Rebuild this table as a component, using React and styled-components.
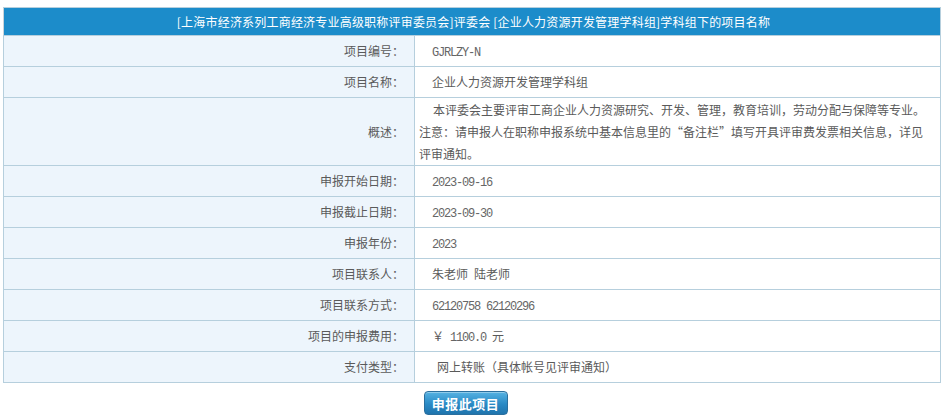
import styled, {createGlobalStyle} from 'styled-components';

const Global = createGlobalStyle`
  body{margin:0;background:#fff;font-family:"Noto Sans CJK SC","Liberation Sans",sans-serif;}
`;

/* ---------- styled ---------- */
const Page  = styled.div`padding:7px 6px 0 3px;`;
const Table = styled.table`
  width:938px;border-collapse:collapse;table-layout:fixed;
  border:1px solid #b6cfdd;border-left-color:#c9d3da;font-size:12px;color:#5a5a5a;
`;
const Head = styled.th`
  height:27px;padding:0 0 0 3px;background:#1c8cca;color:#fff;
  font-weight:normal;font-size:12px;letter-spacing:.2px;text-align:center;white-space:nowrap;
  border:1px solid #b6cfdd;border-left-color:#c9d3da;
`;
const Label = styled.td`
  padding:4px 10px 4px 0;line-height:22px;
  background:#edf5fc;text-align:right;border:1px solid #b6cfdd;
`;
const Value = styled.td`
  padding:${p => p.$tall ? '1px 4px 0 4px' : `4px 5px 4px ${p.$indent || 17}px`};
  line-height:22px;background:#fff;text-align:left;border:1px solid #b6cfdd;
  white-space:nowrap;
`;
const Para = styled.div`height:66px;`;
const Indent = styled.span`padding-left:14px;`;
const Num = styled.span`
  font-family:"Liberation Mono",monospace;font-size:12px;letter-spacing:-1.2px;
  line-height:1;color:#666;
`;
const Actions = styled.div`display:flex;justify-content:center;padding:8px 12px 0 0;`;
const Btn = styled.button`
  height:24px;width:84px;padding:0;border:1px solid #2a6f9e;border-radius:4px;
  background:linear-gradient(#55b2e2,#2a8ac5 55%,#1f74ad);
  color:#fff;font-family:inherit;font-size:13px;font-weight:bold;letter-spacing:.5px;
  box-shadow:inset 0 1px 0 rgba(255,255,255,.35);cursor:pointer;
`;

const rows = [
  ['项目编号：', <Num>GJRLZY-N</Num>],
  ['项目名称：', '企业人力资源开发管理学科组'],
  ['概述：', null, {tall: true}],
  ['申报开始日期：', <Num>2023-09-16</Num>],
  ['申报截止日期：', <Num>2023-09-30</Num>],
  ['申报年份：', <Num>2023</Num>],
  ['项目联系人：', <>朱老师<Num> </Num>陆老师</>],
  ['项目联系方式：', <Num>62120758 62120296</Num>],
  ['项目的申报费用：', <>￥<Num> 1100.0 </Num>元</>],
  ['支付类型：', '网上转账（具体帐号见评审通知）', {indent: 22}],
];

/* ---------- component ---------- */
export default function App() {
  return (
    <Page>
      <Global/>
      <Table>
        <colgroup>
          <col style={{width: 411}}/>
          <col/>
        </colgroup>
        <thead>
          <tr>
            <Head colSpan={2}>[上海市经济系列工商经济专业高级职称评审委员会]评委会 [企业人力资源开发管理学科组]学科组下的项目名称</Head>
          </tr>
        </thead>
        <tbody>
          {rows.map(([label, value, opt = {}]) => (
            <tr key={label}>
              <Label>{label}</Label>
              <Value $tall={opt.tall} $indent={opt.indent}>
                {opt.tall
                  ? <Para>
                      <Indent>本评委会主要评审工商企业人力资源研究、开发、管理，教育培训，劳动分配与保障等专业。</Indent><br/>
                      注意：请申报人在职称申报系统中基本信息里的“备注栏”填写开具评审费发票相关信息，详见<br/>
                      评审通知。
                    </Para>
                  : value}
              </Value>
            </tr>
          ))}
        </tbody>
      </Table>
      <Actions>
        <Btn>申报此项目</Btn>
      </Actions>
    </Page>
  );
}
